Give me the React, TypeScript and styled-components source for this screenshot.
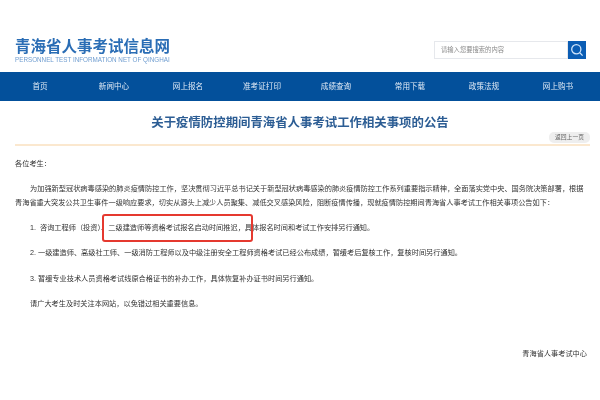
import styled, { createGlobalStyle } from "styled-components";

const GlobalStyle = createGlobalStyle`
  html, body {
    margin: 0;
    padding: 0;
    background: #fff;
  }
  body {
    font-family: "Liberation Sans", "Noto Sans CJK SC", sans-serif;
  }
`;

const Page = styled.div`
  width: 600px;
  height: 400px;
  overflow: hidden;
  background: #fff;
  filter: blur(0.45px);
`;

const Header = styled.header`
  height: 72px;
  padding: 0 14px 0 15px;
  box-sizing: border-box;
  display: flex;
  justify-content: space-between;
  align-items: flex-start;
`;

const Brand = styled.div`
  margin-top: 37px;
  width: 156px;
`;

const BrandName = styled.div`
  font-size: 15.5px;
  line-height: 19px;
  font-weight: 700;
  color: #2a6db5;
  white-space: nowrap;
`;

const BrandSub = styled.div`
  margin-top: 0;
  font-size: 6.3px;
  line-height: 7px;
  color: #6f9dd0;
  white-space: nowrap;
`;

const Search = styled.form`
  margin-top: 41px;
  display: flex;
  height: 18px;
`;

const SearchInput = styled.div`
  width: 134px;
  box-sizing: border-box;
  border: 1px solid #e6e8ec;
  padding-left: 6px;
  font-size: 6.3px;
  line-height: 16px;
  color: #8a8a8a;
`;

const SearchButton = styled.div`
  width: 18px;
  background: #0b5db4;
  display: flex;
  align-items: center;
  justify-content: center;
`;

const Nav = styled.nav`
  height: 29px;
  padding-left: 3px;
  background: #03509b;
  display: flex;
`;

const NavItem = styled.a`
  width: 74px;
  text-align: center;
  font-size: 7.6px;
  line-height: 29px;
  color: #dfe9f5;
`;

const Title = styled.h1`
  margin: 13px 0 0;
  text-align: center;
  font-size: 12.4px;
  line-height: 18px;
  font-weight: 700;
  color: #2c5d94;
`;

const BackRow = styled.div`
  margin: 0 10px 0 15px;
  height: 12px;
  border-bottom: 2px solid #fbe8cf;
  display: flex;
  justify-content: flex-end;
`;

const BackButton = styled.div`
  width: 41px;
  height: 11px;
  border-radius: 5px;
  background: #eeeeee;
  text-align: center;
  font-size: 5.8px;
  line-height: 11px;
  color: #666;
`;

const Body = styled.main`
  padding: 0 13px 0 15px;
  font-size: 7.2px;
  color: #333;
`;

const Line = styled.p<{ $top: number; $indent?: boolean }>`
  position: relative;
  margin: ${(p) => p.$top}px 0 0;
  padding-left: ${(p) => (p.$indent ? 15 : 0)}px;
  line-height: 14.5px;
  white-space: nowrap;
`;

const Highlight = styled.span`
  position: absolute;
  left: 87px;
  top: -7px;
  width: 147px;
  height: 24px;
  border: 2px solid #e5392f;
  border-radius: 3px;
`;

const Signature = styled.p`
  margin: 35px 0 0;
  text-align: right;
  line-height: 14.5px;
`;

const navItems = ["首页", "新闻中心", "网上报名", "准考证打印", "成绩查询", "常用下载", "政策法规", "网上购书"];

export default function App() {
  return (
    <Page>
      <GlobalStyle />
      <Header>
        <Brand>
          <BrandName>青海省人事考试信息网</BrandName>
          <BrandSub>PERSONNEL TEST INFORMATION NET OF QINGHAI</BrandSub>
        </Brand>
        <Search>
          <SearchInput>请输入您要搜索的内容</SearchInput>
          <SearchButton>
            <svg width="14" height="14" viewBox="0 0 14 14" fill="none" stroke="#cfe4fa" strokeWidth="1.3">
              <circle cx="6.3" cy="6.3" r="4.6" />
              <path d="M9.8 9.8L12.6 12.6" />
            </svg>
          </SearchButton>
        </Search>
      </Header>
      <Nav>
        {navItems.map((item) => (
          <NavItem key={item}>{item}</NavItem>
        ))}
      </Nav>
      <Title>关于疫情防控期间青海省人事考试工作相关事项的公告</Title>
      <BackRow>
        <BackButton>返回上一页</BackButton>
      </BackRow>
      <Body>
        <Line $top={11}>各位考生：</Line>
        <Line $top={10} $indent>
          为加强新型冠状病毒感染的肺炎疫情防控工作，坚决贯彻习近平总书记关于新型冠状病毒感染的肺炎疫情防控工作系列重要指示精神，全面落实党中央、国务院决策部署，根据
        </Line>
        <Line $top={0}>
          青海省重大突发公共卫生事件一级响应要求，切实从源头上减少人员聚集、减低交叉感染风险，阻断疫情传播，现就疫情防控期间青海省人事考试工作相关事项公告如下：
        </Line>
        <Line $top={10} $indent>
          1.&nbsp;&nbsp;咨询工程师（投资）、二级建造师等资格考试报名启动时间推迟，具体报名时间和考试工作安排另行通知。
          <Highlight />
        </Line>
        <Line $top={11} $indent>
          2. 一级建造师、高级社工师、一级消防工程师以及中级注册安全工程师资格考试已经公布成绩，暂缓考后复核工作，复核时间另行通知。
        </Line>
        <Line $top={11} $indent>
          3. 暂缓专业技术人员资格考试线原合格证书的补办工作，具体恢复补办证书时间另行通知。
        </Line>
        <Line $top={11} $indent>
          请广大考生及时关注本网站，以免错过相关重要信息。
        </Line>
        <Signature>青海省人事考试中心</Signature>
      </Body>
    </Page>
  );
}
